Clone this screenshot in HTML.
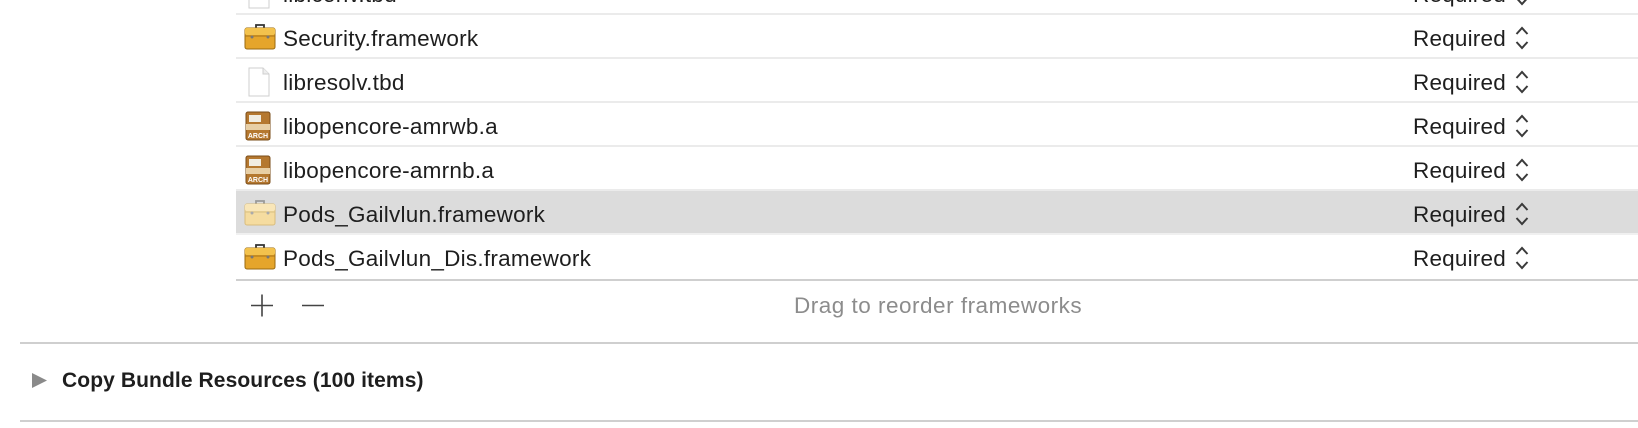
<!DOCTYPE html>
<html><head><style>
body{margin:0;width:1638px;height:428px;background:#fff;overflow:hidden;position:relative;font-family:"Liberation Sans",Helvetica,sans-serif;}
.row{position:absolute;left:236px;right:0;height:44px;border-bottom:2px solid #ebebeb;box-sizing:border-box}
.row.sel{background:#dcdcdc;border-bottom-color:#f0f0f0}
.name{position:absolute;left:47px;top:11px;font-size:22.5px;letter-spacing:0.25px;color:#1e1e1e;white-space:nowrap}
.req{position:absolute;left:1177px;top:11px;font-size:22.5px;letter-spacing:0.2px;color:#1e1e1e}
.chev{position:absolute;left:1279px;top:10px}
.ic{position:absolute;left:8px;top:8px}
.hl{position:absolute;height:2px;background:#cfcfcf}
</style></head><body>
<svg width="0" height="0" style="position:absolute">
<defs>
<symbol id="tb" viewBox="0 0 32 28"><path d="M12 5V2h8v3" fill="none" stroke="#333" stroke-width="1.8"/><rect x="1" y="5" width="30" height="21" rx="2" fill="#e5a52b" stroke="#9a6a10"/><rect x="1" y="5" width="30" height="7" rx="2" fill="#f3c24d"/><line x1="1" y1="13" x2="31" y2="13" stroke="#a7741a"/><circle cx="8" cy="14" r="1.5" fill="#777"/><circle cx="24" cy="14" r="1.5" fill="#777"/></symbol>
<symbol id="tbl" viewBox="0 0 32 28"><path d="M12 5V2h8v3" fill="none" stroke="#999" stroke-width="1.8"/><rect x="1" y="5" width="30" height="21" rx="2" fill="#f5dca0" stroke="#d9bd7d"/><rect x="1" y="5" width="30" height="7" rx="2" fill="#f9e6b8"/><line x1="1" y1="13" x2="31" y2="13" stroke="#d8bf85"/><circle cx="8" cy="14" r="1.5" fill="#aaa"/><circle cx="24" cy="14" r="1.5" fill="#aaa"/></symbol>
<symbol id="ar" viewBox="0 0 26 30"><rect x="1" y="1" width="24" height="28" rx="2" fill="#b5782f" stroke="#7a4c18"/><rect x="1" y="13" width="24" height="6" fill="#e8cfa5"/><rect x="4" y="4" width="12" height="7" fill="#f1ede2"/><text x="13" y="27" font-size="7" font-weight="bold" fill="#fff" text-anchor="middle" font-family="Liberation Sans">ARCH</text></symbol>
<symbol id="fl" viewBox="0 0 26 30"><path d="M3 1h14l6 6v22H3z" fill="#fff" stroke="#cfcfcf"/><path d="M17 1v6h6" fill="#eee" stroke="#cfcfcf"/></symbol>
<symbol id="ch" viewBox="0 0 14 26"><path d="M1.5 9l5.5-6 5.5 6M1.5 17l5.5 6 5.5-6" fill="none" stroke="#3a3a3a" stroke-width="2"/></symbol>
</defs></svg>

<div class="row" style="top:-29px"><svg class="ic" style="left:10px" width="26" height="30"><use href="#fl"/></svg><div class="name">libiconv.tbd</div><div class="req">Required</div><svg class="chev" width="14" height="26"><use href="#ch"/></svg></div>
<div class="row" style="top:15px"><svg class="ic" style="left:8px;top:8px" width="32" height="28"><use href="#tb"/></svg><div class="name">Security.framework</div><div class="req">Required</div><svg class="chev" width="14" height="26"><use href="#ch"/></svg></div>
<div class="row" style="top:59px"><svg class="ic" style="left:10px" width="26" height="30"><use href="#fl"/></svg><div class="name">libresolv.tbd</div><div class="req">Required</div><svg class="chev" width="14" height="26"><use href="#ch"/></svg></div>
<div class="row" style="top:103px"><svg class="ic" style="left:9px" width="26" height="30"><use href="#ar"/></svg><div class="name">libopencore-amrwb.a</div><div class="req">Required</div><svg class="chev" width="14" height="26"><use href="#ch"/></svg></div>
<div class="row" style="top:147px"><svg class="ic" style="left:9px" width="26" height="30"><use href="#ar"/></svg><div class="name">libopencore-amrnb.a</div><div class="req">Required</div><svg class="chev" width="14" height="26"><use href="#ch"/></svg></div>
<div class="row sel" style="top:191px"><svg class="ic" style="top:8px" width="32" height="28"><use href="#tbl"/></svg><div class="name">Pods_Gailvlun.framework</div><div class="req">Required</div><svg class="chev" width="14" height="26"><use href="#ch"/></svg></div>
<div class="row" style="top:235px;border-bottom:none"><svg class="ic" style="top:8px" width="32" height="28"><use href="#tb"/></svg><div class="name">Pods_Gailvlun_Dis.framework</div><div class="req">Required</div><svg class="chev" width="14" height="26"><use href="#ch"/></svg></div>
<div class="hl" style="top:279px;left:236px;right:0"></div>

<svg style="position:absolute;left:250px;top:294px" width="80" height="24"><path d="M1 11.5h22M12 0.5v22" stroke="#444" stroke-width="1.6"/><path d="M52 11.5h22" stroke="#444" stroke-width="1.6"/></svg>
<div style="position:absolute;left:794px;top:293px;font-size:22.5px;letter-spacing:0.5px;color:#8c8c8c">Drag to reorder frameworks</div>

<div class="hl" style="top:342px;left:20px;right:0"></div>
<svg style="position:absolute;left:32px;top:373px" width="16" height="16"><path d="M0 0L15 7.5L0 15z" fill="#8a8a8a"/></svg>
<div style="position:absolute;left:62px;top:369px;font-size:21px;letter-spacing:0.1px;font-weight:bold;color:#1e1e1e">Copy Bundle Resources (100 items)</div>
<div class="hl" style="top:420px;left:20px;right:0"></div>
</body></html>
